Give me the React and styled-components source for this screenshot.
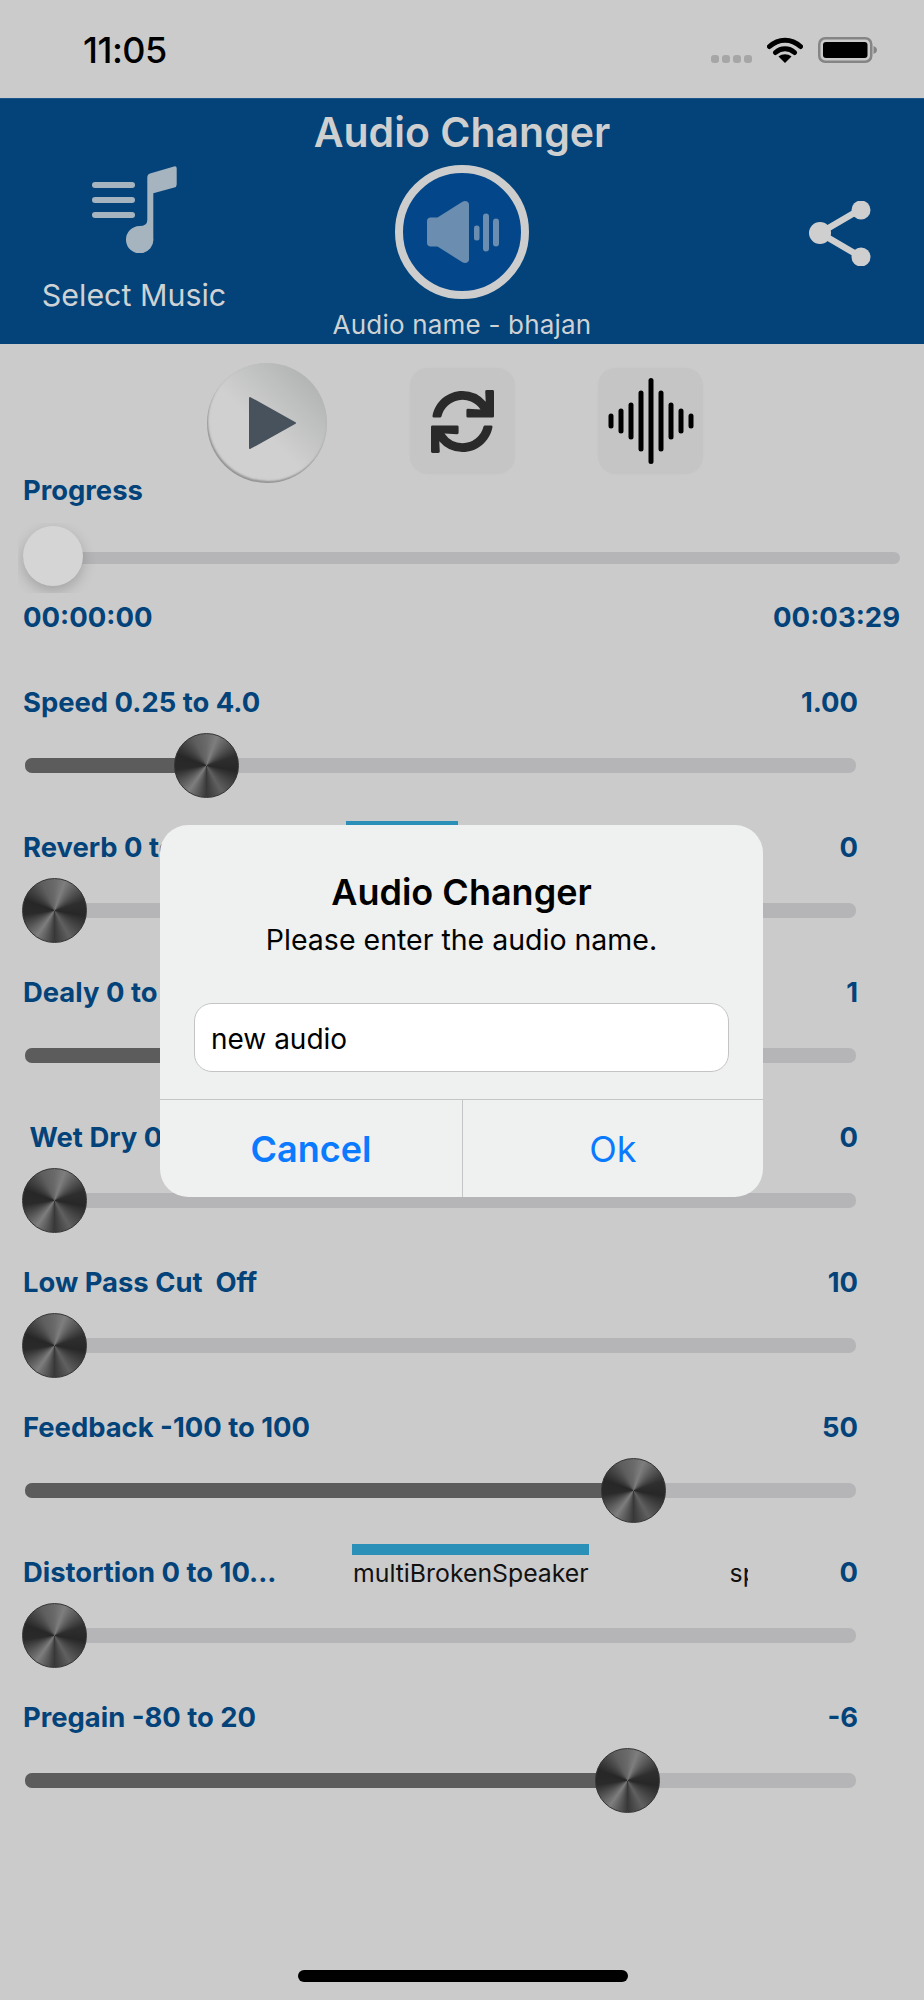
import React from "react";
import styled, { createGlobalStyle } from "styled-components";
import { FaSync } from "react-icons/fa";

const GlobalStyle = createGlobalStyle`
  html, body {
    margin: 0;
    padding: 0;
    background: #cbcbcb;
  }
  * {
    box-sizing: border-box;
  }
`;

const Page = styled.div`
  position: relative;
  display: flex;
  flex-direction: column;
  width: 924px;
  height: 2000px;
  overflow: hidden;
  background: #cbcbcb;
  font-family: Inter, "Noto Sans", sans-serif;
  color: #03437a;
`;

const StatusBar = styled.div`
  display: flex;
  align-items: flex-start;
  justify-content: space-between;
  height: 98px;
  padding: 31px 47px 0 83px;
  color: #000;
`;

const Clock = styled.div`
  font-size: 36px;
  line-height: 38px;
  font-weight: 500;
  letter-spacing: -0.5px;
`;

const StatusIcons = styled.div`
  display: flex;
  align-items: flex-end;
  gap: 15px;
  padding-top: 6px;
`;

const SignalDots = styled.div`
  display: flex;
  gap: 3px;
`;

const Dot = styled.span`
  width: 8px;
  height: 8px;
  border-radius: 3px;
  background: #a6a6a6;
`;

const Header = styled.header`
  display: grid;
  grid-template-columns: 268px 388px 268px;
  grid-template-rows: 66px 1fr;
  height: 246px;
  background: #03437a;
  border-top: 1px solid #1b5587;
  color: #cfd2d4;
`;

const Title = styled.h1`
  grid-column: 1 / -1;
  margin: 11px 0 0;
  text-align: center;
  font-size: 41px;
  line-height: 44px;
  font-weight: 600;
  color: #cfcfcf;
`;

const SelectMusic = styled.div`
  display: flex;
  flex-direction: column;
  align-items: center;
`;

const SelectLabel = styled.div`
  margin-top: 24px;
  font-size: 30.4px;
  line-height: 36px;
  font-weight: 400;
`;

const CenterColumn = styled.div`
  display: flex;
  flex-direction: column;
  align-items: center;
`;

const SpeakerRing = styled.div`
  display: flex;
  align-items: center;
  justify-content: center;
  width: 134px;
  height: 134px;
  border-radius: 50%;
  border: 8px solid #cdcdcd;
  background: #03468a;
  filter: blur(0.5px);
`;

const AudioName = styled.div`
  margin-top: 11px;
  font-size: 26px;
  line-height: 30px;
  letter-spacing: 0.2px;
`;

const ShareColumn = styled.div`
  display: flex;
  justify-content: flex-end;
  padding: 36px 52px 0 0;
`;

const Controls = styled.div`
  display: flex;
  align-items: flex-start;
  gap: 83px;
  height: 130px;
  padding: 19px 0 0 207px;
`;

const PlayButton = styled.div`
  display: flex;
  align-items: center;
  justify-content: center;
  flex: none;
  width: 120px;
  height: 120px;
  padding-left: 12px;
  border-radius: 50%;
  background: linear-gradient(45deg, #d0d0d0 45%, #a9abab 100%);
  box-shadow: inset 1px -2px 2px rgba(120, 120, 120, 0.7);
`;

const SquareButton = styled.div`
  display: flex;
  align-items: center;
  justify-content: center;
  flex: none;
  width: 105px;
  height: 106px;
  margin-top: 5px;
  border-radius: 18px;
  background: #c5c5c5;
  box-shadow: 0 0 2px #c7c7c7;
  color: #2a2a2a;
`;

const Label = styled.div`
  font-size: 27.4px;
  line-height: 32px;
  font-weight: 700;
  white-space: pre;
`;

const TimeLabel = styled(Label)`
  font-size: 27.5px;
`;

const ProgressSection = styled.section`
  padding: 0 24px 0 23px;
`;

const ProgressTrackArea = styled.div`
  position: relative;
  display: flex;
  align-items: center;
  height: 64px;
  margin-top: 20px;
`;

const ProgressTrack = styled.div`
  flex: 1;
  height: 12px;
  border-radius: 6px;
  background: #b5b5b7;
`;

const ThumbShadow = styled.div`
  position: absolute;
  left: -5px;
  top: -3px;
  width: 82px;
  height: 70px;
  overflow: hidden;
`;

const Thumb = styled.div`
  position: absolute;
  left: 5px;
  top: 3px;
  width: 60px;
  height: 60px;
  border-radius: 50%;
  background: #d5d5d5;
  box-shadow: 0 5px 14px rgba(0, 0, 0, 0.2);
`;

const TimeRow = styled.div`
  display: flex;
  justify-content: space-between;
  margin-top: 11px;
`;

const SliderList = styled.section`
  margin-top: 53px;
  padding: 0 66px 0 23px;
`;

const SliderRow = styled.div`
  height: 145px;
`;

const LabelRow = styled.div`
  display: flex;
  justify-content: space-between;
`;

const TrackArea = styled.div`
  position: relative;
  display: flex;
  align-items: center;
  height: 65px;
  margin: 15px 2px 0 2px;
`;

const Track = styled.div`
  position: relative;
  flex: 1;
  height: 15px;
  border-radius: 7px;
  background: #b5b5b7;
  overflow: hidden;
`;

const TrackFill = styled.div`
  height: 100%;
  background: #5c5c5c;
`;

const Knob = styled.div`
  position: absolute;
  top: 0;
  width: 65px;
  height: 65px;
  border-radius: 50%;
  border: 1.5px solid #333;
  background: conic-gradient(
    #6a6a6a 0deg,
    #7e7e7e 20deg,
    #2e2e2e 72deg,
    #272727 100deg,
    #606060 150deg,
    #383838 180deg,
    #7e7e7e 215deg,
    #2a2a2a 262deg,
    #272727 290deg,
    #5e5e5e 335deg,
    #6a6a6a 360deg
  );
`;

const EffectStrip = styled.div`
  position: absolute;
  left: 352px;
  top: 1544px;
  width: 396px;
  height: 50px;
  overflow: hidden;
  color: #111;
  font-size: 24.8px;
`;

const EffectBar = styled.div`
  width: 237px;
  height: 11px;
  background: #2b90b8;
`;

const EffectNames = styled.div`
  display: flex;
  gap: 141px;
  margin: 3px 0 0 1px;
  line-height: 30px;
  white-space: nowrap;
`;

const HiddenBar = styled.div`
  position: absolute;
  left: 346px;
  top: 821px;
  width: 112px;
  height: 8px;
  background: #2b90b8;
`;

const Dialog = styled.div`
  position: absolute;
  left: 160px;
  top: 825px;
  display: flex;
  flex-direction: column;
  width: 603px;
  height: 372px;
  border-radius: 28px;
  background: #eff0f0;
  color: #000;
  overflow: hidden;
`;

const DialogTitle = styled.div`
  margin-top: 45px;
  text-align: center;
  font-size: 36px;
  line-height: 44px;
  font-weight: 600;
`;

const DialogMessage = styled.div`
  margin-top: 6px;
  text-align: center;
  font-size: 28.5px;
  line-height: 40px;
`;

const NameInput = styled.div`
  height: 69px;
  margin: 43px 34px 0 34px;
  padding-left: 16px;
  border: 1px solid #c4c4c4;
  border-radius: 18px;
  background: #fff;
  font-size: 28px;
  line-height: 70px;
`;

const DialogActions = styled.div`
  display: grid;
  grid-template-columns: 302px 1fr;
  flex: 1;
  margin-top: 27px;
  border-top: 1px solid #c4c5c6;
`;

const DialogButton = styled.div`
  display: flex;
  align-items: center;
  justify-content: center;
  font-size: 36px;
  font-weight: ${(p) => (p.$primary ? 600 : 400)};
  color: #0a7aff;
  & + & {
    border-left: 1px solid #c4c5c6;
  }
`;

const HomeIndicator = styled.div`
  position: absolute;
  left: 298px;
  bottom: 18px;
  width: 330px;
  height: 12px;
  border-radius: 6px;
  background: #000;
`;

const sliders = [
  { label: "Speed 0.25 to 4.0", value: "1.00", pos: 0.197 },
  { label: "Reverb 0 to 100", value: "0", pos: 0 },
  { label: "Dealy 0 to 2", value: "1", pos: 0.5 },
  { label: " Wet Dry 0 to 100", value: "0", pos: 0 },
  { label: "Low Pass Cut  Off", value: "10", pos: 0 },
  { label: "Feedback -100 to 100", value: "50", pos: 0.75 },
  { label: "Distortion 0 to 10...", value: "0", pos: 0 },
  { label: "Pregain -80 to 20", value: "-6", pos: 0.742 },
];

const waveBars = [15, 25, 37, 61, 86, 61, 37, 25, 15];

function Slider({ label, value, pos }) {
  // knob travels 772px along the 831px track
  const left = -3 + pos * 772;
  return (
    <SliderRow>
      <LabelRow>
        <Label>{label}</Label>
        <Label>{value}</Label>
      </LabelRow>
      <TrackArea>
        <Track>
          <TrackFill style={{ width: left + 30 }} />
        </Track>
        <Knob style={{ left }} />
      </TrackArea>
    </SliderRow>
  );
}

function WifiIcon() {
  return (
    <svg width="36" height="26" viewBox="0 0 36 26">
      <path
        d="M2.500 9.500C11.500 1 24.500 1 33.500 9.500M8.500 15.500C14 10.500 22 10.500 27.500 15.500"
        fill="none"
        stroke="#000"
        strokeWidth="5"
        strokeLinecap="round"
      />
      <path d="M11.500 19.500C15.500 16.500 20.500 16.500 24.500 19.500L18 26Z" fill="#000" />
    </svg>
  );
}

function BatteryIcon() {
  return (
    <svg width="59" height="26" viewBox="0 0 59 26">
      <rect x="1.250" y="1.250" width="52" height="23.500" rx="6" fill="none" stroke="#858585" strokeWidth="2.500" />
      <rect x="5" y="5" width="44.500" height="16" rx="3" fill="#000" />
      <path d="M55.500 9v8c2-.7 3.500-2.200 3.500-4s-1.500-3.300-3.500-4z" fill="#858585" />
    </svg>
  );
}

function MusicIcon() {
  return (
    <svg width="88" height="88" viewBox="90 165 88 88" fill="#a6b4c0">
      <rect x="92" y="182" width="43" height="6" rx="3" />
      <rect x="92" y="197" width="43" height="6" rx="3" />
      <rect x="92" y="212" width="43" height="6" rx="3" />
      <path d="M147.300 177Q147.300 174.300 150 173.600L174 166.500Q176.700 165.800 176.700 168.500V184.500Q176.700 187 174.300 187.500L153.300 193.300V238A13.700 13.700 0 1 1 139.500 226Q147.300 226 147.300 220Z" />
    </svg>
  );
}

function SpeakerIcon() {
  return (
    <svg width="75" height="70" viewBox="0 0 75 70" fill="#6a8db0">
      <path d="M2 24c0-2 1.500-3.500 3.500-3.500h7L37 5c3-2 7-1 7 2.500v55c0 3.500-4 4.500-7 2.500L12.500 49.500h-7C3.500 49.500 2 48 2 46z" />
      <rect x="49" y="28.500" width="5.500" height="15" rx="2.500" />
      <rect x="58" y="16.500" width="6" height="38" rx="3" />
      <rect x="68" y="21.500" width="6" height="28" rx="3" />
    </svg>
  );
}

function ShareIcon() {
  return (
    <svg width="64" height="65" viewBox="0 0 64 65" fill="#cfcfcf">
      <path d="M12 32L53 8M12 32L53 56" stroke="#cfcfcf" strokeWidth="6.500" />
      <circle cx="53" cy="9" r="9.500" />
      <circle cx="12" cy="32" r="11" />
      <circle cx="53" cy="56" r="9.500" />
    </svg>
  );
}

function PlayIcon() {
  return (
    <svg width="48" height="54" viewBox="0 0 48 54">
      <path d="M1 2L46 27L1 52Z" fill="#47525c" stroke="#47525c" strokeWidth="2" strokeLinejoin="round" />
    </svg>
  );
}

function WaveIcon() {
  return (
    <svg width="86" height="86" viewBox="0 0 86 86">
      {waveBars.map((h, i) => (
        <rect key={i} x={0.500 + i * 10} y={43 - h / 2} width="5" height={h} rx="2.500" fill="#000" />
      ))}
    </svg>
  );
}

export default function App() {
  return (
    <Page>
      <GlobalStyle />
      <StatusBar>
        <Clock>11:05</Clock>
        <StatusIcons>
          <SignalDots>
            <Dot />
            <Dot />
            <Dot />
            <Dot />
          </SignalDots>
          <WifiIcon />
          <BatteryIcon />
        </StatusIcons>
      </StatusBar>

      <Header>
        <Title>Audio Changer</Title>
        <SelectMusic>
          <MusicIcon />
          <SelectLabel>Select Music</SelectLabel>
        </SelectMusic>
        <CenterColumn>
          <SpeakerRing>
            <SpeakerIcon />
          </SpeakerRing>
          <AudioName>Audio name - bhajan</AudioName>
        </CenterColumn>
        <ShareColumn>
          <ShareIcon />
        </ShareColumn>
      </Header>

      <Controls>
        <PlayButton>
          <PlayIcon />
        </PlayButton>
        <SquareButton>
          <FaSync size={63} />
        </SquareButton>
        <SquareButton>
          <WaveIcon />
        </SquareButton>
      </Controls>

      <ProgressSection>
        <Label>Progress</Label>
        <ProgressTrackArea>
          <ProgressTrack />
          <ThumbShadow>
            <Thumb />
          </ThumbShadow>
        </ProgressTrackArea>
        <TimeRow>
          <TimeLabel>00:00:00</TimeLabel>
          <TimeLabel>00:03:29</TimeLabel>
        </TimeRow>
      </ProgressSection>

      <SliderList>
        {sliders.map((s) => (
          <Slider key={s.label} {...s} />
        ))}
      </SliderList>

      <EffectStrip>
        <EffectBar />
        <EffectNames>
          <span>multiBrokenSpeaker</span>
          <span>sp</span>
        </EffectNames>
      </EffectStrip>

      <HiddenBar />
      <Dialog>
        <DialogTitle>Audio Changer</DialogTitle>
        <DialogMessage>Please enter the audio name.</DialogMessage>
        <NameInput>new audio</NameInput>
        <DialogActions>
          <DialogButton $primary>Cancel</DialogButton>
          <DialogButton>Ok</DialogButton>
        </DialogActions>
      </Dialog>

      <HomeIndicator />
    </Page>
  );
}
